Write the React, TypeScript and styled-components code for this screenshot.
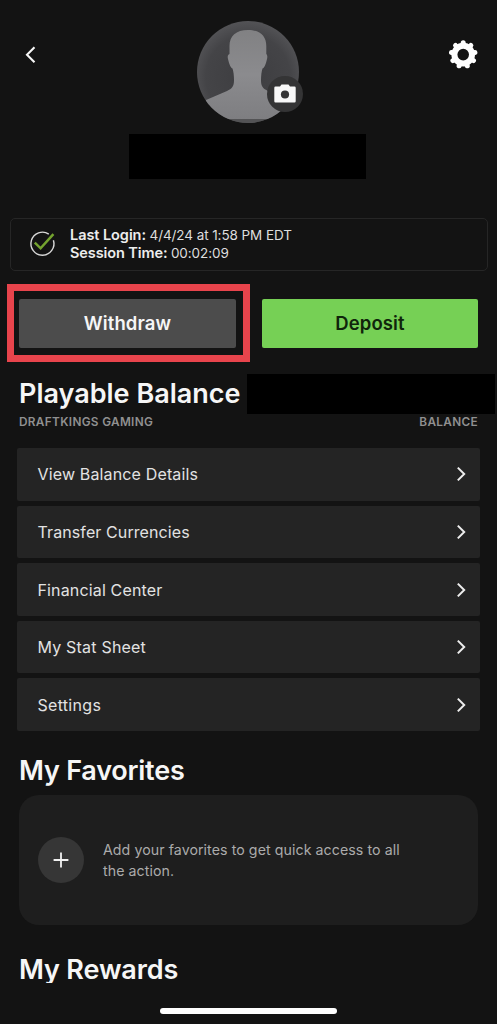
import React from "react";
import styled, { createGlobalStyle } from "styled-components";

const GlobalStyle = createGlobalStyle`
  * { box-sizing: border-box; }
  body {
    margin: 0;
    background: #131313;
    font-family: Inter, "Liberation Sans", sans-serif;
    color: #f6f6f6;
  }
  button { font-family: inherit; border: 0; padding: 0; cursor: pointer; }
`;

const Screen = styled.main`
  display: flex;
  flex-direction: column;
  width: 497px;
  height: 1024px;
  overflow: hidden;
  background: #131313;
`;

const Header = styled.header`
  display: flex;
  justify-content: space-between;
  align-items: flex-start;
  height: 134px;
  padding: 21px 19px 0 16px;
`;

const IconButton = styled.button`
  display: flex;
  width: 30px;
  height: 30px;
  margin-top: 19px;
  background: transparent;
`;

const BackButton = styled(IconButton)`
  width: 31px;
  padding-left: 4px;
`;

const AvatarWrap = styled.div`
  position: relative;
  width: 102px;
  height: 102px;
`;

const CameraBadge = styled.span`
  position: absolute;
  left: 70px;
  top: 55px;
  display: flex;
  width: 36px;
  height: 36px;
  border-radius: 50%;
  background: #343435;
`;

const HiddenName = styled.div`
  width: 237px;
  height: 45px;
  margin-left: 129px;
  flex: none;
  background: #000;
`;

const SessionCard = styled.section`
  display: flex;
  align-items: center;
  flex: none;
  height: 53px;
  margin: 39px 9px 0 10px;
  padding: 0 0 2px 17px;
  gap: 13px;
  border: 1px solid #262626;
  border-radius: 5px;
`;

const SessionLines = styled.div`
  display: flex;
  flex-direction: column;
`;

const SessionLine = styled.div<{ $track: number }>`
  display: flex;
  gap: 3.5px;
  height: 18px;
  line-height: 18px;
  font-size: 13.5px;
  color: #dedede;
  letter-spacing: -0.08px;
  white-space: nowrap;

  strong {
    font-size: 14.5px;
    font-weight: 600;
    letter-spacing: ${(p) => p.$track}px;
    color: #ededed;
  }
`;

const Actions = styled.div`
  display: flex;
  align-items: center;
  flex: none;
  gap: 12px;
  height: 78px;
  margin: 13px 19px 0 7px;
`;

const Highlight = styled.div`
  display: flex;
  width: 243px;
  height: 78px;
  padding: 8px 7px 7px 5px;
  border: 7px solid #e8444c;
`;

const ActionButton = styled.button<{ $primary?: boolean }>`
  flex: 1;
  height: 49px;
  border-radius: 2px;
  background: ${(p) => (p.$primary ? "#76d055" : "#4c4c4c")};
  color: ${(p) => (p.$primary ? "#10240b" : "#f6f6f6")};
  font-size: 18.5px;
  font-weight: 600;
  line-height: 49px;
  letter-spacing: 0.12px;
`;

const BalanceHeader = styled.div`
  display: flex;
  align-items: center;
  justify-content: space-between;
  flex: none;
  height: 40px;
  margin-top: 12px;
  padding: 0 2px 0 19px;
`;

const Title = styled.h2<{ $track?: number }>`
  margin: 0;
  font-size: 27px;
  font-weight: 600;
  line-height: 40px;
  letter-spacing: ${(p) => p.$track ?? 0}px;
  white-space: nowrap;
`;

const HiddenAmount = styled.div`
  width: 248px;
  height: 40px;
  background: #000;
`;

const Captions = styled.div`
  display: flex;
  justify-content: space-between;
  flex: none;
  height: 16px;
  padding: 0 19px;
  font-size: 11.8px;
  font-weight: 600;
  line-height: 16px;
  letter-spacing: 0.33px;
  color: #909090;
`;

const Menu = styled.nav`
  display: flex;
  flex-direction: column;
  flex: none;
  gap: 4.9px;
  padding: 0 17px;
  margin-top: 18px;
`;

const MenuRow = styled.a`
  display: flex;
  align-items: center;
  justify-content: space-between;
  height: 52.7px;
  padding: 0 14px 0 20.5px;
  border-radius: 2px;
  background: #242424;
  color: #e2e2e2;
  font-size: 16px;
`;

const MenuLabel = styled.span<{ $track: number }>`
  letter-spacing: ${(p) => p.$track}px;
`;

const SectionHeader = styled.div<{ $top: number; $height: number }>`
  flex: none;
  height: ${(p) => p.$height}px;
  margin-top: ${(p) => p.$top}px;
  padding-left: 19px;
`;

const FavoritesCard = styled.section`
  display: flex;
  align-items: center;
  flex: none;
  gap: 19px;
  height: 130px;
  margin: 4px 19px 0;
  padding-left: 19px;
  border-radius: 20px;
  background: #1e1e1e;
`;

const AddButton = styled.button`
  display: flex;
  flex: none;
  width: 46px;
  height: 46px;
  border-radius: 50%;
  background: #363636;
`;

const FavoritesText = styled.p`
  margin: 0;
  padding-top: 1px;
  font-size: 14.2px;
  line-height: 21.5px;
  letter-spacing: 0.07px;
  color: #ababab;
  white-space: nowrap;
`;

const HomeBar = styled.footer`
  position: relative;
  flex: none;
  height: 41px;
  padding: 25px 0 0 160px;
  background: #131313;
`;

const HomeIndicator = styled.div`
  width: 177px;
  height: 6px;
  border-radius: 3px;
  background: #fff;
`;

const BackIcon = () => (
  <svg width="30" height="30" fill="none" stroke="#f6f6f6" strokeWidth="2.1" style={{ flex: "none" }}>
    <path d="M14.5 7.3 7 14.8l7.5 7.5" />
  </svg>
);

const teeth = Array.from({ length: 9 }, (_, i) => i * 40);

const GearIcon = () => (
  <svg width="30" height="30">
    <circle cx="15.2" cy="14.6" r="8.8" fill="none" stroke="#fff" strokeWidth="6" />
    {teeth.map((angle) => (
      <path
        key={angle}
        d="M15.2 5V2.7"
        stroke="#fff"
        strokeWidth="5"
        strokeLinecap="round"
        transform={`rotate(${angle} 15.2 14.6)`}
      />
    ))}
  </svg>
);

const Avatar = () => (
  <svg width="102" height="102">
    <defs>
      <radialGradient id="backdrop" cx="50%" cy="55%" r="55%">
        <stop offset="0" stopColor="#3d3d40" />
        <stop offset="0.75" stopColor="#444447" />
        <stop offset="1" stopColor="#535356" />
      </radialGradient>
      <linearGradient id="person" x1="0" y1="0" x2="0" y2="1">
        <stop offset="0" stopColor="#818183" />
        <stop offset="0.5" stopColor="#8b8b8e" />
        <stop offset="1" stopColor="#7e7e81" />
      </linearGradient>
      <clipPath id="disc">
        <circle cx="51" cy="51" r="51" />
      </clipPath>
    </defs>
    <g clipPath="url(#disc)">
      <rect width="102" height="102" fill="url(#backdrop)" />
      <path
        d="M51 9C39 9 32.5 15 32.5 25v8c-2 1-2 3-1.5 5s2 9 4.5 9.5c1 3 1.5 7 1.5 12 0 6-2 8-7 10.5L9 79v19h84V79L71 70c-5-2.5-7-4.5-7-10.5 0-5 .5-9 1.5-12 2.500-.5 4-7.5 4.5-9.5s.5-4-.7-5v-8C69.300 15 63 9 51 9Z"
        fill="url(#person)"
      />
      <rect y="98" width="102" height="4" fill="#535355" />
    </g>
  </svg>
);

const CameraIcon = () => (
  <svg width="36" height="36">
    <path
      d="M8.500 10.500H13l1.500-2h7l1.500 2h4.500a1.200 1.200 0 0 1 1.200 1.200v13.600a1.200 1.200 0 0 1-1.200 1.200h-19a1.200 1.200 0 0 1-1.200-1.200V11.700a1.200 1.200 0 0 1 1.200-1.200Z"
      fill="#f8f8f8"
    />
    <circle cx="18" cy="18.500" r="4.100" fill="#343435" />
  </svg>
);

const VerifiedIcon = () => (
  <svg width="29" height="29" fill="none">
    <path d="M20.800 5.100A11.500 11.500 0 1 0 25.400 11.200" stroke="#d8d8d8" strokeWidth="1.400" />
    <path d="m6.800 13.700 5.800 5.600L25.400 5.100" stroke="#74a32f" strokeWidth="2.500" />
  </svg>
);

const ChevronIcon = () => (
  <svg width="10" height="16" fill="none" stroke="#ededed" strokeWidth="2">
    <path d="m1.800 1.600 6.400 6.400-6.400 6.400" />
  </svg>
);

const PlusIcon = () => (
  <svg width="46" height="46" stroke="#f2f2f2" strokeWidth="1.800">
    <path d="M23 15.600v14.800M15.600 23h14.800" />
  </svg>
);

const menuItems = [
  { label: "View Balance Details", track: 0.15 },
  { label: "Transfer Currencies", track: 0.1 },
  { label: "Financial Center", track: 0.15 },
  { label: "My Stat Sheet", track: 0.2 },
  { label: "Settings", track: 0.3 },
];

export default function App() {
  return (
    <>
      <GlobalStyle />
      <Screen>
        <Header>
          <BackButton aria-label="Back">
            <BackIcon />
          </BackButton>
          <AvatarWrap>
            <Avatar />
            <CameraBadge>
              <CameraIcon />
            </CameraBadge>
          </AvatarWrap>
          <IconButton aria-label="Preferences">
            <GearIcon />
          </IconButton>
        </Header>
        <HiddenName />
        <SessionCard>
          <VerifiedIcon />
          <SessionLines>
            <SessionLine $track={-0.06}>
              <strong>Last Login:</strong>
              <span>4/4/24 at 1:58 PM EDT</span>
            </SessionLine>
            <SessionLine $track={-0.1}>
              <strong>Session Time:</strong>
              <span>00:02:09</span>
            </SessionLine>
          </SessionLines>
        </SessionCard>
        <Actions>
          <Highlight>
            <ActionButton>Withdraw</ActionButton>
          </Highlight>
          <ActionButton $primary>Deposit</ActionButton>
        </Actions>
        <BalanceHeader>
          <Title>Playable Balance</Title>
          <HiddenAmount />
        </BalanceHeader>
        <Captions>
          <span>DRAFTKINGS GAMING</span>
          <span>BALANCE</span>
        </Captions>
        <Menu>
          {menuItems.map((item) => (
            <MenuRow key={item.label}>
              <MenuLabel $track={item.track}>{item.label}</MenuLabel>
              <ChevronIcon />
            </MenuRow>
          ))}
        </Menu>
        <SectionHeader $top={19.6} $height={40}>
          <Title $track={-0.22}>My Favorites</Title>
        </SectionHeader>
        <FavoritesCard>
          <AddButton aria-label="Add">
            <PlusIcon />
          </AddButton>
          <FavoritesText>
            Add your favorites to get quick access to all
            <br />
            the action.
          </FavoritesText>
        </FavoritesCard>
        <SectionHeader $top={25} $height={33}>
          <Title $track={-0.15}>My Rewards</Title>
        </SectionHeader>
        <HomeBar>
          <HomeIndicator />
        </HomeBar>
      </Screen>
    </>
  );
}
